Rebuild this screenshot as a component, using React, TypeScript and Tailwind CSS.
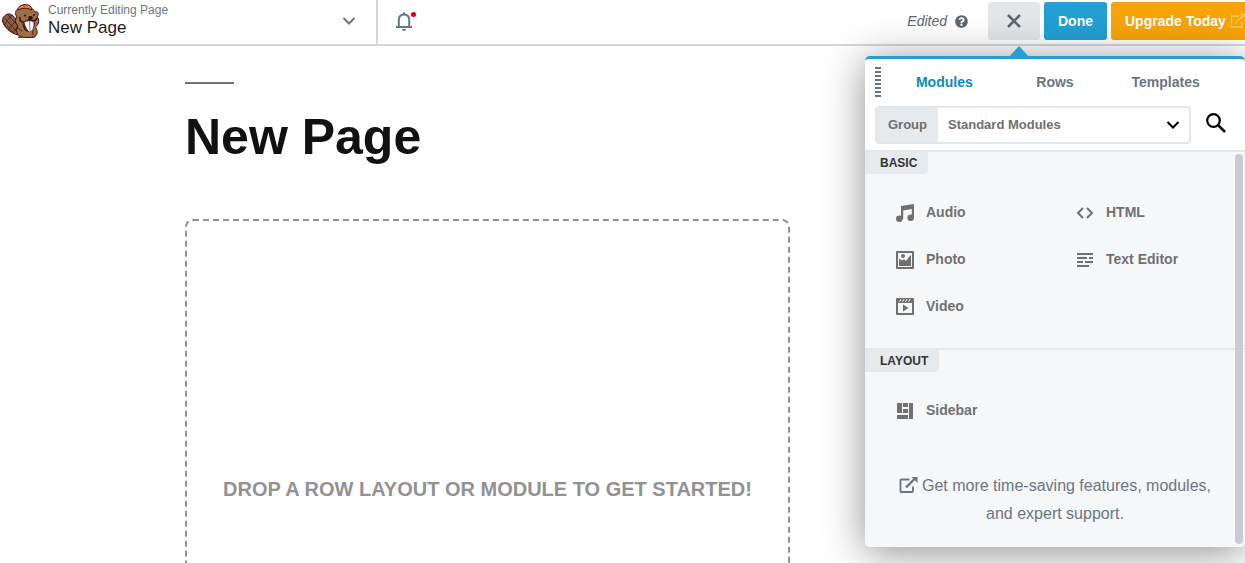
import React from "react";
import { FaQuestionCircle } from "react-icons/fa";

function BeaverLogo() {
  return (
    <svg width="44" height="44" viewBox="0 0 44 44" aria-hidden="true">
      <path d="M8 14C5 14.500 2 18 2.500 21C4 27 10 33 18 35L21 26C17 21 13 13 8 14Z" fill="#8a5f40" stroke="#401014" strokeWidth="1" />
      <path d="M4.500 18L18 33M8 15L20 28M3 23L14 33M12 15L4 25M16 20L8 30M19 24L13 33" stroke="#401014" strokeWidth=".7" />
      <path d="M18 9C15 10 15 15 17 17C14 20 16 24 18 26C15 31 17 36 23 37.500H33C38 36 38 31 35.500 27C39.500 24 39.500 19 37 17C39.500 14 38 11 35 12C32 7 28 6 24 7Z" fill="#9b7048" stroke="#401014" strokeWidth="1" strokeLinejoin="round" />
      <path d="M18 8.500C20 5 24 3.800 28 5C31 6 32 8 31.500 10C27 7.500 22 8 18 10Z" fill="#ef8421" stroke="#401014" strokeWidth="1" />
      <path d="M23 5L25 7.500" stroke="#8a3711" strokeWidth="1" />
      <path d="M20 17C19 21 22 23 25 22C27 21 28 20 30 19.500C32 21 35 22 37 18" fill="none" stroke="#401014" strokeWidth="1.600" />
      <path d="M22.500 22C22 28 25 32 29 32C33 31 35 27 35 22L30 20Z" fill="#5b1a1b" />
      <path d="M24.500 22L29.300 21L29.800 32C27 30 25 26 24.500 22Z" fill="#fff" />
      <path d="M30 21L33.500 22C34 26 33 30 30.300 31.500Z" fill="#fff" />
      <ellipse cx="30.500" cy="17.500" rx="2.400" ry="1.500" fill="#281014" />
      <circle cx="25" cy="15.500" r="1.100" fill="#281014" />
      <circle cx="34" cy="15" r="1" fill="#281014" />
      <path d="M17 28C19 28 20 30 22 31M34 30C32 31 32 33 34 35" fill="none" stroke="#401014" strokeWidth="1" />
      <path d="M18 37C20 35 24 35.500 25 38H18ZM30 38C31 36 34 35.500 36 37Z" fill="#6e3b24" />
    </svg>
  );
}

function Chevron({ className }: { className?: string }) {
  return (
    <svg width="14" height="8" viewBox="0 0 14 8" className={className} fill="none" stroke="currentColor" strokeWidth="2" aria-hidden="true">
      <path d="M1.500 1L7 6.500L12.500 1" />
    </svg>
  );
}

function ExternalIcon({ className }: { className?: string }) {
  return (
    <svg width="19" height="18" viewBox="0 0 19 18" className={className} fill="none" stroke="currentColor" aria-hidden="true">
      <path d="M10.500 3.500H2.500Q1.500 3.500 1.500 4.500V15Q1.500 16 2.500 16H13Q14 16 14 15V10.500" strokeWidth="1.900" />
      <path d="M7 11.500L15.500 3" strokeWidth="2.400" />
      <path d="M12.500 1H18.500V7Z" fill="currentColor" stroke="none" />
    </svg>
  );
}

const icons: Record<string, React.ReactNode> = {
  Audio: (
    <g>
      <path d="M6 3L19 1V15H16.800V6L8.200 7.400V16H6Z" />
      <circle cx="4.300" cy="15.800" r="3.300" />
      <circle cx="15.700" cy="14.800" r="3.300" />
    </g>
  ),
  Photo: (
    <g>
      <path fillRule="evenodd" d="M2 1H18Q19 1 19 2V18Q19 19 18 19H2Q1 19 1 18V2Q1 1 2 1ZM3 3V17H17V3Z" />
      <path d="M4 16V8.500L7 10.500L9 9L11 11L14 7L16 5V16Z" />
      <circle cx="8" cy="6" r="2" />
    </g>
  ),
  Video: (
    <g>
      <path fillRule="evenodd" d="M2 1H18Q19 1 19 2V17Q19 18 18 18H2Q1 18 1 17V2Q1 1 2 1ZM3 6V16H17V6Z" />
      <path d="M8 7.500L13.500 11L8 14.500Z" />
      <path d="M4.500 4.800L6.200 2M7.500 4.800L9.200 2M10.500 4.800L12.200 2M13.500 4.800L15.200 2" stroke="#f6f7f9" strokeWidth="1" />
    </g>
  ),
  HTML: <path fill="none" stroke="currentColor" strokeWidth="2" d="M8 5L3 10L8 15M12 5L17 10L12 15" />,
  "Text Editor": (
    <path d="M2 3H18V5H2ZM2 7H12V9H2ZM14 7H18V9H14ZM2 11H8V13H2ZM10 11H18V13H10ZM2 15H14V17H2Z" />
  ),
  Sidebar: <path d="M2 2H7V12H2ZM8 2H13V6H8ZM8 8H13V12H8ZM2 14H13V18H2ZM14 2H18V18H14Z" />,
};

function ModuleGroup({ title, items }: { title: string; items: string[] }) {
  return (
    <section className="border-t-2 border-[#e5e8eb] pb-4">
      <h2 className="w-fit rounded-br bg-[#e6eaed] pl-[15px] pr-[11px] text-[12px] font-bold leading-[22px] text-[#333]">
        {title}
      </h2>
      <div className="grid grid-cols-[180px_1fr] pl-[30px] pt-[17px]">
        {items.map((name) => (
          <button key={name} type="button" className="flex h-[47px] items-center gap-[11px] pb-1 text-left text-[14px] font-bold text-[#707070]">
            <svg width="20" height="20" viewBox="0 0 20 20" fill="currentColor" className="shrink-0" aria-hidden="true">
              {icons[name]}
            </svg>
            {name}
          </button>
        ))}
      </div>
    </section>
  );
}

function ModulesPanel() {
  return (
    <aside className="absolute right-0 top-[56px] z-10 w-[380px] rounded-[5px] border-t-[3px] border-[#239fd3] bg-white shadow-[0_5px_40px_rgba(0,0,0,0.45)]">
      <svg width="20" height="11" viewBox="0 0 20 11" className="absolute -top-[13px] left-[144px]" fill="#239fd3" aria-hidden="true">
        <path d="M10 0L20 11H0Z" />
      </svg>
      <div className="flex h-[47px] items-center pr-6">
        <svg width="6" height="30" viewBox="0 0 6 30" className="ml-[10px] mr-2 shrink-0 -translate-y-px" aria-hidden="true">
          <path d="M3 0V30" stroke="#6b7582" strokeWidth="6" strokeDasharray="2 2" />
        </svg>
        <nav className="grid flex-1 grid-cols-3 text-[14px] font-bold text-[#6b7582]">
          <button type="button" className="text-[#0e8abd]">Modules</button>
          <button type="button">Rows</button>
          <button type="button">Templates</button>
        </nav>
      </div>
      <div className="flex items-center pb-[6px] pl-[10px]">
        <div className="flex h-[38px] w-[316px] items-stretch overflow-hidden rounded border-2 border-[#e3e7ea] text-[13px] font-bold text-[#6f6f6f]">
          <label htmlFor="module-group" className="flex w-[61px] items-center justify-center bg-[#e6eaed]">
            Group
          </label>
          <div className="relative flex-1">
            <select id="module-group" className="h-full w-full appearance-none bg-white pl-[10px] font-bold outline-none">
              <option>Standard Modules</option>
            </select>
            <Chevron className="pointer-events-none absolute right-[9px] top-[13px] text-black" />
          </div>
        </div>
        <button type="button" aria-label="Search modules" className="mb-1 ml-[15px] text-black">
          <svg width="20" height="20" viewBox="0 0 20 20" fill="none" stroke="currentColor" aria-hidden="true">
            <circle cx="7.500" cy="7.500" r="6.300" strokeWidth="2.200" />
            <path d="M12 12L19 19" strokeWidth="2.500" />
          </svg>
        </button>
      </div>
      <div className="relative rounded-b-[5px] bg-[#f6f7f9]">
        <ModuleGroup title="BASIC" items={["Audio", "HTML", "Photo", "Text Editor", "Video"]} />
        <ModuleGroup title="LAYOUT" items={["Sidebar"]} />
        <p className="px-6 pb-[19px] pt-5 text-center text-[16px] leading-7 text-[#6b7582]">
          <a href="#upgrade">
            <ExternalIcon className="mr-1 inline-block align-[-3px]" />
            Get more time-saving features, modules, and expert support.
          </a>
        </p>
        <div className="absolute bottom-[3px] right-[2px] top-1 w-2 rounded bg-[#c8cdd3]" />
      </div>
    </aside>
  );
}

export default function App() {
  return (
    <div className="relative flex h-screen flex-col overflow-hidden bg-white font-['Liberation_Sans',Arial,sans-serif]">
      <header className="flex h-[46px] shrink-0 border-b-2 border-[#d3d8dc]">
        <button type="button" className="flex w-[378px] shrink-0 items-start border-r-2 border-[#d3d8dc] text-left">
          <BeaverLogo />
          <span className="flex flex-1 flex-col pl-1 pt-[2px]">
            <span className="text-[12px] leading-4 text-[#6b7582]">Currently Editing Page</span>
            <span className="text-[17px] leading-5 text-[#1c1c1c]">New Page</span>
          </span>
          <Chevron className="mr-5 mt-[17px] text-[#6b7582]" />
        </button>
        <button type="button" aria-label="Notifications" className="ml-4 self-start pt-[10px]">
          <svg width="24" height="22" viewBox="0 0 24 22" fill="none" aria-hidden="true">
            <path d="M2 17H18M4.800 17V10C4.800 6.500 7 4.500 10 4.500S15.200 6.500 15.200 10V17" stroke="#6b7582" strokeWidth="2" />
            <path d="M10 2.500V5" stroke="#6b7582" strokeWidth="2.400" />
            <path d="M8 19H12Q12 21 10 21T8 19Z" fill="#6b7582" />
            <circle cx="19.500" cy="4.500" r="2.500" fill="#e60000" />
          </svg>
        </button>
        <div className="ml-auto flex items-start gap-1 pt-[2px] text-[14px] font-bold">
          <div className="mr-4 flex h-[38px] items-center gap-2 font-normal italic text-[#5c6570]">
            Edited
            <FaQuestionCircle size={13} />
          </div>
          <button type="button" aria-label="Close" className="flex h-[38px] w-[52px] items-center justify-center rounded-[3px] bg-[#e2e6e9] text-[#5c6570]">
            <svg width="14" height="14" viewBox="0 0 14 14" stroke="currentColor" strokeWidth="2.600" aria-hidden="true">
              <path d="M1 1L13 13M13 1L1 13" />
            </svg>
          </button>
          <button type="button" className="h-[38px] w-[63px] rounded-[3px] bg-[#239fd3] text-white">Done</button>
          <a href="#upgrade" className="flex h-[38px] w-[134px] items-center gap-1 overflow-hidden rounded-l-[3px] bg-[#f8a30a] pl-[14px] text-white">
            <span className="shrink-0">Upgrade Today</span>
            <svg width="16" height="16" viewBox="0 0 16 16" className="shrink-0" fill="none" stroke="#fccb55" strokeWidth="1.300" aria-hidden="true">
              <path d="M9 3H1.500V14H12V9M5 10L14 2M10 1.500H15V6" />
            </svg>
          </a>
        </div>
      </header>
      <main className="flex-1 overflow-hidden pl-[185px] pr-[455px]">
        <div className="mt-9 h-[2px] w-[49px] bg-[#707070]" />
        <h1 className="mt-[25px] text-[50px] font-bold leading-[56px] text-[#111]">New Page</h1>
        <div className="mt-[54px] flex h-[540px] items-center justify-center rounded-lg border-2 border-dashed border-[#929292] text-center text-[20px] font-bold text-[#929292]">
          DROP A ROW LAYOUT OR MODULE TO GET STARTED!
        </div>
      </main>
      <ModulesPanel />
    </div>
  );
}
